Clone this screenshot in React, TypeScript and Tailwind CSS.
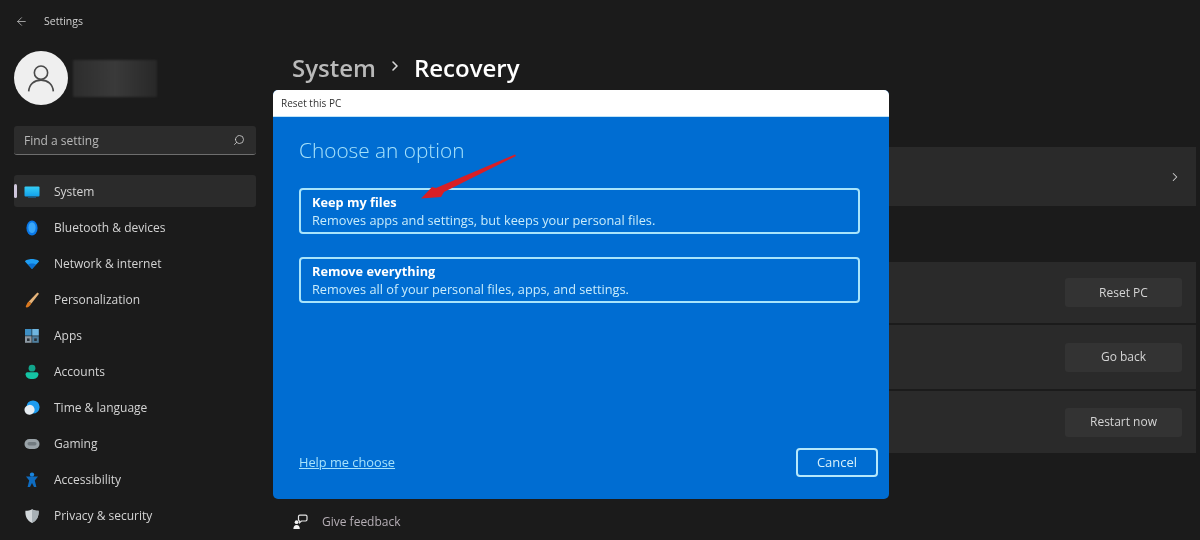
import React from 'react';
import { ArrowLeft, ChevronRight, Search } from 'lucide-react';

const SystemIcon = () => (
  <svg width="16" height="12" viewBox="0 0 16 12">
    <defs>
      <linearGradient id="sys" x1="0" y1="0" x2="0" y2="1">
        <stop offset="0" stopColor="#35cdf5" />
        <stop offset="1" stopColor="#12a0ea" />
      </linearGradient>
    </defs>
    <rect x="0.5" y="0.5" width="15" height="10" rx="1" fill="url(#sys)" />
    <rect x="4" y="10.8" width="8" height="1" fill="#1d5f8c" />
  </svg>
);

const BluetoothIcon = () => (
  <svg width="16" height="16" viewBox="0 0 16 16">
    <ellipse cx="8" cy="8" rx="5.6" ry="7.4" fill="#0a78e8" />
    <ellipse cx="8" cy="7.6" rx="3.6" ry="5.4" fill="#3aa6f7" />
  </svg>
);

const WifiIcon = () => (
  <svg width="16" height="12" viewBox="0 0 16 12">
    <path d="M1 3.4C1 2 5 1 8 1C11 1 15 2 15 3.4L8 11Z" fill="#1f9df2" />
    <path d="M4 6.2C6 5.2 10 5.2 12 6.2L8 11Z" fill="#0a6fd0" />
  </svg>
);

const BrushIcon = () => (
  <svg width="16" height="16" viewBox="0 0 16 16">
    <path d="M13.4 0.6L15 1.8L7.4 11.4L4.8 9.6Z" fill="#e6b47a" />
    <path d="M4.6 9.4L7.4 11.4C6.4 13.8 4.4 15.2 2.6 15.4C1.8 15.4 1.6 14.6 2 13.8C2.8 12.4 3.2 10.6 4.6 9.4Z" fill="#d9781f" />
  </svg>
);

const AppsIcon = () => (
  <svg width="16" height="16" viewBox="0 0 16 16">
    <rect x="1" y="1" width="6.6" height="6.6" fill="#3e8fc4" />
    <rect x="8.2" y="1" width="6.6" height="6.6" fill="#6fb6e0" />
    <rect x="1" y="8.2" width="6.6" height="6.6" fill="#8d99a3" />
    <rect x="8.2" y="8.2" width="6.6" height="6.6" fill="#4f7f9f" />
    <rect x="3" y="10.4" width="2.6" height="2.6" fill="#2b3338" />
    <rect x="10.2" y="10.4" width="2.6" height="2.6" fill="#2b3338" />
  </svg>
);

const AccountsIcon = () => (
  <svg width="16" height="16" viewBox="0 0 16 16">
    <circle cx="8" cy="4.2" r="3.4" fill="#12a58c" />
    <path d="M1.6 10.2C1.6 8.8 2.6 8.2 3.8 8.2H12.2C13.4 8.2 14.4 8.8 14.4 10.2C14.4 13.4 11.6 15 8 15C4.4 15 1.6 13.4 1.6 10.2Z" fill="#14c4a4" />
  </svg>
);

const TimeIcon = () => (
  <svg width="16" height="16" viewBox="0 0 16 16">
    <circle cx="9" cy="7" r="6.6" fill="#1d9cf0" />
    <rect x="0.6" y="5" width="10" height="9.6" rx="4.6" fill="#e6edf2" transform="rotate(-20 5.6 10)" />
  </svg>
);

const GamingIcon = () => (
  <svg width="16" height="12" viewBox="0 0 16 12">
    <rect x="0.5" y="1" width="15" height="10" rx="5" fill="#9aa3a8" />
    <rect x="3.5" y="4" width="9" height="3.5" rx="1.7" fill="#727b80" />
  </svg>
);

const AccessibilityIcon = () => (
  <svg width="16" height="16" viewBox="0 0 16 16">
    <circle cx="8" cy="2.6" r="2.2" fill="#1a86e0" />
    <path d="M2 4.4L14 4.4L10.8 8.6L12.4 15H10L8 11L6 15H3.6L5.2 8.6Z" fill="#0f6cc0" />
  </svg>
);

const ShieldIcon = () => (
  <svg width="16" height="16" viewBox="0 0 16 16">
    <path d="M8 1.2C10 2.4 12 2.6 14.6 2.8C15 8.4 12.8 12.8 8 15C3.2 12.8 1 8.4 1.4 2.8C4 2.6 6 2.4 8 1.2Z" fill="#d2d7da" />
    <path d="M8 1.2C10 2.4 12 2.6 14.6 2.8C15 8.4 12.8 12.8 8 15Z" fill="#a8b0b5" />
  </svg>
);

const FeedbackIcon = () => (
  <svg width="16" height="16" viewBox="0 0 16 16">
    <path d="M6.5 2.5C6.5 1.7 7.1 1.2 7.9 1.2H13.6C14.4 1.2 15 1.7 15 2.5V5.6C15 6.4 14.4 7 13.6 7H9.5L7.6 8.6V7C7 7 6.5 6.4 6.5 5.6Z" fill="none" stroke="#e4e4e4" strokeWidth="1.2" />
    <circle cx="4.6" cy="8.2" r="1.9" fill="#f2f2f2" />
    <path d="M1.4 15C1.4 12.4 2.6 11 4.6 11C6.6 11 7.8 12.4 7.8 15Z" fill="#f2f2f2" />
  </svg>
);

const navItems = [
  { label: 'System', icon: <SystemIcon />, active: true },
  { label: 'Bluetooth & devices', icon: <BluetoothIcon /> },
  { label: 'Network & internet', icon: <WifiIcon /> },
  { label: 'Personalization', icon: <BrushIcon /> },
  { label: 'Apps', icon: <AppsIcon /> },
  { label: 'Accounts', icon: <AccountsIcon /> },
  { label: 'Time & language', icon: <TimeIcon /> },
  { label: 'Gaming', icon: <GamingIcon /> },
  { label: 'Accessibility', icon: <AccessibilityIcon /> },
  { label: 'Privacy & security', icon: <ShieldIcon /> },
];

const settingRows = [
  { label: 'Reset PC', height: 'h-[61px]' },
  { label: 'Go back', height: 'h-[64px]' },
  { label: 'Restart now', height: 'h-[62px]' },
];

const Option = ({ title, text }: { title: string; text: string }) => (
  <div className="h-[46px] rounded-[4px] border-2 border-[#a8e4fb] px-[11px] pt-[4px] text-[12.75px] leading-[17px] text-[#c8ecfb]">
    <div className="font-bold text-white">{title}</div>
    <div className="mt-[1px]">{text}</div>
  </div>
);

export default function App() {
  return (
    <div className="h-[540px] w-[1200px] overflow-hidden bg-[#1b1b1b]">
      <div className="relative flex h-[540px] w-[1200px] bg-[#1b1b1b] font-['Open_Sans',sans-serif] text-[#d8d8d8] blur-[0.4px]">
        {/* Sidebar */}
        <aside className="flex w-[273px] shrink-0 flex-col px-[14px] pr-[17px]">
          <div className="flex h-[42px] items-center text-[10.5px] text-[#d0d0d0]">
            <ArrowLeft size={13} strokeWidth={1.4} className="ml-[1px] text-[#c8c8c8]" />
            <span className="ml-[16px] pt-[1px]">Settings</span>
          </div>

          <div className="mt-[9px] flex items-center">
            <div className="flex h-[54px] w-[54px] items-center justify-center rounded-full bg-[#efefef]">
              <svg width="30" height="30" viewBox="0 0 28 28" fill="none" stroke="#4a4a4a" strokeWidth="1.5">
                <circle cx="14" cy="9" r="6.2" />
                <path d="M2.5 26.5C3 20 7.5 16 14 16C20.5 16 25 20 25.5 26.5" />
              </svg>
            </div>
            <div className="ml-[5px] h-[37px] w-[84px] bg-gradient-to-r from-[#2d2d2d] via-[#3a3a3a] to-[#282828] blur-[1px]" />
          </div>

          <div className="mt-[21px] flex h-[29px] items-center justify-between rounded-[3px] border-b border-[#6e6e6e] bg-[#2c2c2c] pl-[10px] pr-[11px] text-[12px] text-[#b8b8b8]">
            <span className="pt-[2px]">Find a setting</span>
            <Search size={12} strokeWidth={1.6} className="-scale-x-100 text-[#d4d4d4]" />
          </div>

          <nav className="mt-[20px] flex flex-col gap-[4px]">
            {navItems.map((item) => (
              <div
                key={item.label}
                className={`relative flex h-[32px] items-center rounded-[3px] pt-[2px] text-[12px] text-[#d4d4d4] ${item.active ? 'bg-[#2b2b2b]' : ''}`}
              >
                {item.active && <span className="absolute left-0 top-[9px] h-[14px] w-[3px] rounded-sm bg-[#cfc6dc]" />}
                <span className="ml-[10px] flex w-[16px] justify-center">{item.icon}</span>
                <span className="ml-[14px]">{item.label}</span>
              </div>
            ))}
          </nav>
        </aside>

        {/* Main content, mostly behind the dialog */}
        <main className="flex min-w-0 flex-1 flex-col pr-[4px]">
          <div className="flex h-[147px] items-start gap-[11px] pl-[19px] pt-[50px] text-[24px] font-semibold leading-[36px]">
            <span className="text-[#b9b9b9]">System</span>
            <ChevronRight size={16} strokeWidth={2.4} className="mt-[8px] text-[#d8d8d8]" />
            <span className="text-white">Recovery</span>
          </div>

          <div className="flex h-[59px] items-center justify-end bg-[#2a2a2a] pr-[14px]">
            <ChevronRight size={14} strokeWidth={1.8} className="text-[#d0d0d0]" />
          </div>

          <div className="mt-[56px] flex flex-col gap-[2px]">
            {settingRows.map((row) => (
              <div key={row.label} className={`flex items-center justify-end bg-[#2a2a2a] pr-[14px] ${row.height}`}>
                <button className="h-[29px] w-[117px] rounded-[3px] bg-[#333333] text-[12px] text-[#d4d4d4]">
                  {row.label}
                </button>
              </div>
            ))}
          </div>

          <div className="mt-[60px] flex items-center pl-[19px] text-[12px] text-[#b5aeb5]">
            <FeedbackIcon />
            <span className="ml-[14px]">Give feedback</span>
          </div>
        </main>

        {/* Reset dialog */}
        <div className="absolute left-[273px] top-[90px] flex h-[409px] w-[616px] flex-col overflow-hidden rounded-[5px] bg-[#006dd2]">
          <div className="flex h-[27px] shrink-0 items-center border-b border-[#bfe3f7] bg-white pl-[8px] text-[10px] text-[#333333]">
            Reset this PC
          </div>
          <div className="flex flex-1 flex-col px-[26px] pb-[22px] pt-[18px]">
            <h1 className="text-[20.8px] font-light leading-[30px] text-[#a6e2fb]">Choose an option</h1>
            <div className="mt-[23px] flex w-[561px] flex-col gap-[23px]">
              <Option title="Keep my files" text="Removes apps and settings, but keeps your personal files." />
              <Option title="Remove everything" text="Removes all of your personal files, apps, and settings." />
            </div>
            <div className="mt-auto flex items-center justify-between">
              <a className="pt-[1px] text-[12.8px] text-[#a6e2fb] underline">Help me choose</a>
              <button className="-mr-[15px] h-[29px] w-[82px] rounded-[4px] border-2 border-[#b5e8fb] text-[13px] text-[#d6f1fb]">
                Cancel
              </button>
            </div>
          </div>
        </div>

        {/* Red annotation arrow */}
        <svg className="absolute left-[415px] top-[150px]" width="105" height="55" viewBox="0 0 105 55">
          <path d="M100 4.5L101 6L29 42L26 47L6 48.5L17 37L21 38Z" fill="#d81f26" />
        </svg>
      </div>
    </div>
  );
}
